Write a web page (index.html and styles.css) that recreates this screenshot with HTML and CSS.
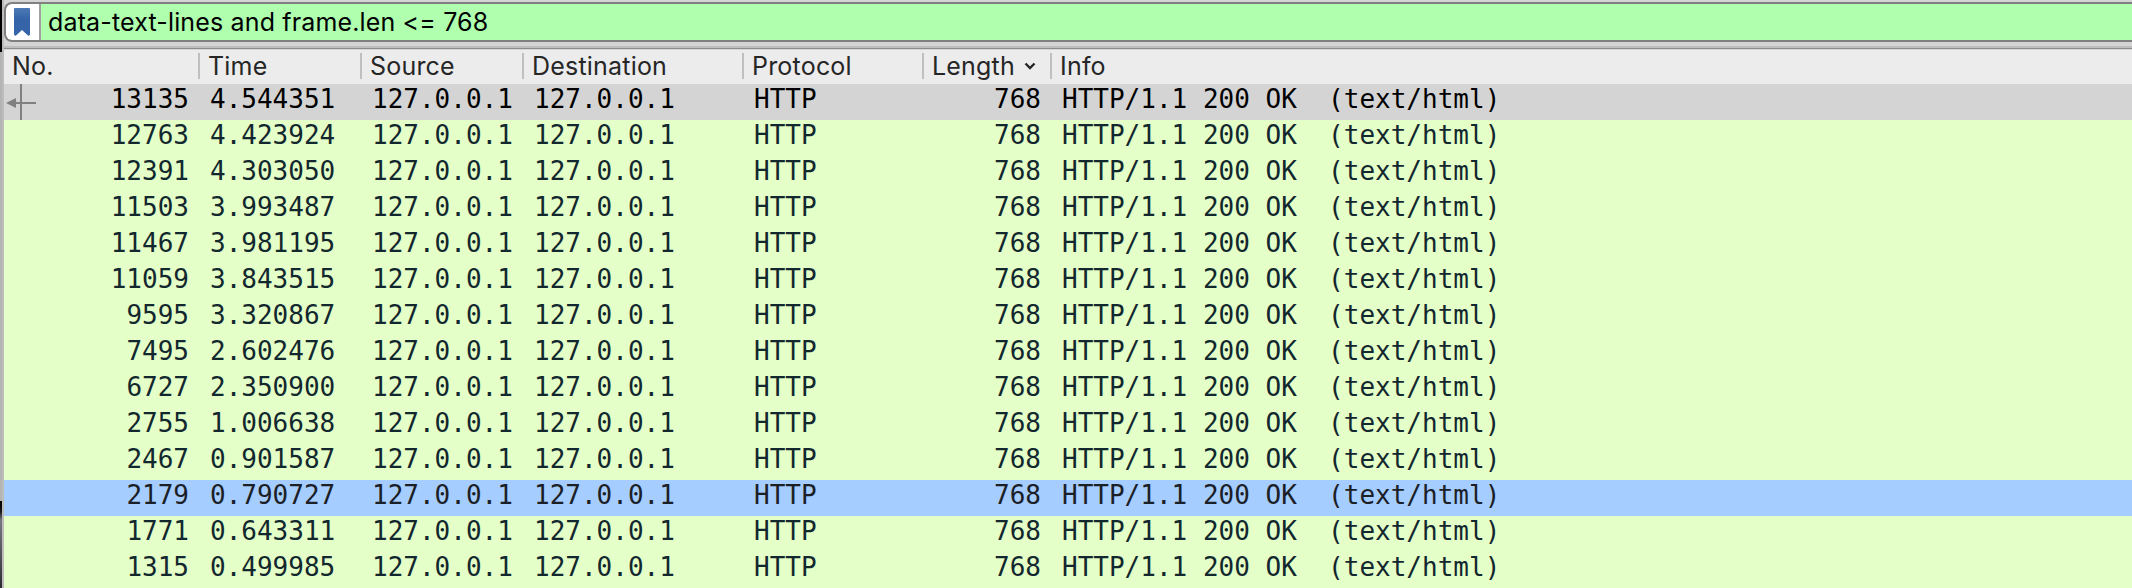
FILE: index.html
```html
<!DOCTYPE html>
<html lang="en">
<head>
<meta charset="utf-8">
<title>Packet list</title>
<link rel="stylesheet" href="styles.css">
</head>
<body>
<div class="window">
  <div class="desktop-edge"><div class="edge-top"></div><div class="edge-mid"></div><div class="edge-low"></div></div>
  <div class="window-border"></div>
  <main class="content">
    <div class="toolbar">
      <div class="filter">
        <div class="bookmark">
          <svg width="16" height="28" viewBox="0 0 16 28"><defs><linearGradient id="bm" x1="0" y1="0" x2="0" y2="1"><stop offset="0" stop-color="#4d7ab6"/><stop offset=".4" stop-color="#3565a8"/><stop offset="1" stop-color="#3565a8"/></linearGradient></defs><path d="M1 0H15Q16 0 16 1V26.5Q15.500 28 14 27.500L8 22L2 27.500Q.5 28 0 26.500V1Q0 0 1 0Z" fill="url(#bm)"/></svg>
        </div>
        <div class="expression"><span class="expression-text">data-text-lines and frame.len &lt;= 768</span></div>
      </div>
    </div>
    <div class="splitter"></div>
    <div class="row header">
      <div class="head"><span>No.</span></div><div class="head"><span>Time</span></div><div class="head"><span>Source</span></div><div class="head"><span>Destination</span></div><div class="head"><span>Protocol</span></div><div class="head"><span>Length</span><svg class="sort" width="12" height="8" viewBox="0 0 12 8"><path d="M1.500 1.500L6 6L10.500 1.500" fill="none" stroke="#262626" stroke-width="2.400"/></svg></div><div class="head"><span>Info</span></div>
    </div>
    <div id="packets"></div>
  </main>
</div>
<script src="packets.js"></script>
</body>
</html>
```
FILE: styles.css
```css
body { margin: 0; overflow: hidden; }
.window { display: flex; width: 2132px; height: 588px; overflow: hidden; background: #d4d4d4; }
.desktop-edge { display: flex; flex-direction: column; width: 2px; flex: none; }
.edge-top { height: 52px; background: #000; }
.edge-mid { height: 449px; background: #b4b4b4; }
.edge-low { flex: 1; background: linear-gradient(#000, #15151a 12%, #77777f 22%, #55555c 60%, #2c2c31); }
.window-border { width: 2px; flex: none; background: #bcbcbc; }
.content { flex: 1; min-width: 0; }
.toolbar { height: 46px; box-sizing: border-box; padding-top: 2px; background: #d4d4d4; }
.filter { display: flex; box-sizing: border-box; height: 40px; border: 2px solid #808080; border-right: 0; border-radius: 8px 0 0 8px; overflow: hidden; background: #fff; }
.bookmark { display: flex; box-sizing: border-box; width: 35px; padding: 4px 0 0 8px; border-right: 2px solid #a0a0a0; }
.expression { flex: 1; padding-left: 7px; background: #afffaf; font: 25px/36px Inter, sans-serif; letter-spacing: .15px; color: #000; white-space: pre; }
.splitter { height: 4px; background: linear-gradient(#bebebe 0 2px, #8c8c8c 2px 3px, #d8d8d8 3px 4px); }
.row { display: grid; grid-template-columns: 196px 162px 162px 220px 180px 128px 1fr; height: 36px; }
.header { height: 34px; background: #ececec; color: #262626; font: 25px/32px Inter, sans-serif; letter-spacing: .2px; }
.head { display: flex; align-items: flex-start; box-sizing: border-box; height: 26px; margin-top: 3px; padding-left: 8px; border-right: 2px solid #bfbfbf; line-height: 26px; white-space: nowrap; }
.head:last-child { border-right: 0; }
.sort { margin: 9px 0 0 9px; }
.packet { position: relative; background: #e4ffc7; color: #12272e; font: 26px/30px "DejaVu Sans Mono", monospace; }
.packet.selected { background: #d4d4d4; color: #000; }
.packet.hovered { background: #a5cdff; color: #1b2027; }
.cell { padding: 0 11px 0 10px; white-space: pre; }
.number { text-align: right; }
.related { position: absolute; left: 0; top: 0; }
```
FILE: packets.js
```js
const packets = [
  [13135, "4.544351"], [12763, "4.423924"], [12391, "4.303050"], [11503, "3.993487"],
  [11467, "3.981195"], [11059, "3.843515"], [9595, "3.320867"], [7495, "2.602476"],
  [6727, "2.350900"], [2755, "1.006638"], [2467, "0.901587"], [2179, "0.790727"],
  [1771, "0.643311"], [1315, "0.499985"]
];
const arrow = '<svg class="related" width="34" height="36" viewBox="0 0 34 36"><path d="M17 0V36M8 19H32" stroke="#808080" stroke-width="2"/><path d="M2 19L12 14V24Z" fill="#808080"/></svg>';
document.getElementById("packets").innerHTML = packets.map(([no, time]) => {
  const state = no === 13135 ? " selected" : no === 2179 ? " hovered" : "";
  return `<div class="row packet${state}">${no === 13135 ? arrow : ""}<div class="cell number">${no}</div><div class="cell">${time}</div><div class="cell">127.0.0.1</div><div class="cell">127.0.0.1</div><div class="cell">HTTP</div><div class="cell number">768</div><div class="cell">HTTP/1.1 200 OK  (text/html)</div></div>`;
}).join("");
```
